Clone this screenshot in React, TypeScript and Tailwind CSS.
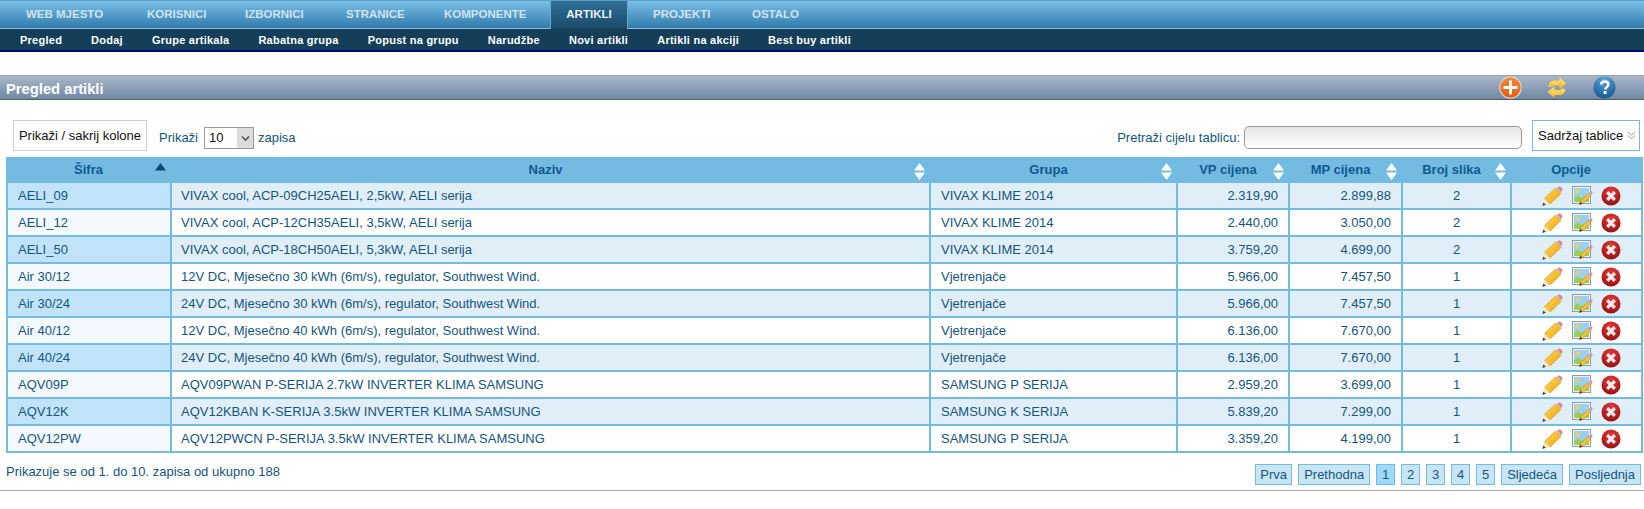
import React from "react";

const rows = [
  ["AELI_09", "VIVAX cool, ACP-09CH25AELI, 2,5kW, AELI serija", "VIVAX KLIME 2014", "2.319,90", "2.899,88", "2"],
  ["AELI_12", "VIVAX cool, ACP-12CH35AELI, 3,5kW, AELI serija", "VIVAX KLIME 2014", "2.440,00", "3.050,00", "2"],
  ["AELI_50", "VIVAX cool, ACP-18CH50AELI, 5,3kW, AELI serija", "VIVAX KLIME 2014", "3.759,20", "4.699,00", "2"],
  ["Air 30/12", "12V DC, Mjesečno 30 kWh (6m/s), regulator, Southwest Wind.", "Vjetrenjače", "5.966,00", "7.457,50", "1"],
  ["Air 30/24", "24V DC, Mjesečno 30 kWh (6m/s), regulator, Southwest Wind.", "Vjetrenjače", "5.966,00", "7.457,50", "1"],
  ["Air 40/12", "12V DC, Mjesečno 40 kWh (6m/s), regulator, Southwest Wind.", "Vjetrenjače", "6.136,00", "7.670,00", "1"],
  ["Air 40/24", "24V DC, Mjesečno 40 kWh (6m/s), regulator, Southwest Wind.", "Vjetrenjače", "6.136,00", "7.670,00", "1"],
  ["AQV09P", "AQV09PWAN P-SERIJA 2.7kW INVERTER KLIMA SAMSUNG", "SAMSUNG P SERIJA", "2.959,20", "3.699,00", "1"],
  ["AQV12K", "AQV12KBAN K-SERIJA 3.5kW INVERTER KLIMA SAMSUNG", "SAMSUNG K SERIJA", "5.839,20", "7.299,00", "1"],
  ["AQV12PW", "AQV12PWCN P-SERIJA 3.5kW INVERTER KLIMA SAMSUNG", "SAMSUNG P SERIJA", "3.359,20", "4.199,00", "1"],
];

const navLeft: [string, string][] = [
  ["WEB MJESTO", "w-[121px] pl-[21px]"],
  ["KORISNICI", "w-[98px] pl-[21px]"],
  ["IZBORNICI", "w-[101px] pl-[21px]"],
  ["STRANICE", "w-[98px] pl-[21px]"],
  ["KOMPONENTE", "w-[127px] pl-[21px]"],
];
const navRight: [string, string][] = [
  ["PROJEKTI", "w-[99px] pl-[25px]"],
  ["OSTALO", "w-[99px] pl-[25px]"],
];
const sub = ["Pregled", "Dodaj", "Grupe artikala", "Rabatna grupa", "Popust na grupu", "Narudžbe", "Novi artikli", "Artikli na akciji", "Best buy artikli"];

function PlusIcon() {
  return (
    <svg width="23" height="23" viewBox="0 0 23 23">
      <defs>
        <linearGradient id="pl" x1="0" y1="0" x2="0" y2="1">
          <stop offset="0" stopColor="#f58a3c" />
          <stop offset="1" stopColor="#e8590c" />
        </linearGradient>
      </defs>
      <circle cx="11.5" cy="11.5" r="10.7" fill="url(#pl)" stroke="#d9d4d0" strokeWidth="1.2" />
      <path d="M11.5 4.5v14M4.5 11.5h14" stroke="#fff" strokeWidth="3" />
    </svg>
  );
}

function SyncIcon() {
  return (
    <svg width="20" height="22" viewBox="0 0 20 22">
      <defs>
        <linearGradient id="sy" x1="0" y1="0" x2="0" y2="1">
          <stop offset="0" stopColor="#ffe680" />
          <stop offset="1" stopColor="#fbb516" />
        </linearGradient>
      </defs>
      <path d="M19.500 6.500 12.500 0.500V3.500H8C4.500 3.500 2 5.500 1.500 9.500L5.500 10C5.800 8.800 6.500 8.500 8 8.500H12.500V12z" fill="url(#sy)" />
      <path d="M0.500 15 7.500 21V18H12C15.500 18 18 16 18.500 12L14.500 11.500C14.200 12.800 13.500 13 12 13H7.500V9.500z" fill="url(#sy)" />
    </svg>
  );
}

function HelpIcon() {
  return (
    <svg width="23" height="23" viewBox="0 0 23 23">
      <defs>
        <radialGradient id="hp" cx="0.5" cy="0.15" r="0.95">
          <stop offset="0" stopColor="#5aa6dc" />
          <stop offset="1" stopColor="#0f4f8a" />
        </radialGradient>
      </defs>
      <circle cx="11.500" cy="11.500" r="11" fill="url(#hp)" />
      <path d="M8 8.500c.3-2 1.700-3 3.700-3 2.200 0 3.700 1.200 3.700 3 0 2.600-3 2.600-3 5" fill="none" stroke="#fff" strokeWidth="2.400" />
      <rect x="10.700" y="15" width="2.800" height="3" fill="#fff" />
    </svg>
  );
}

function PencilIcon() {
  return (
    <svg width="21" height="20" viewBox="0 0 21 20">
      <defs>
        <linearGradient id="pn" x1="0" y1="0" x2="1" y2="1">
          <stop offset="0" stopColor="#ffdc55" />
          <stop offset="1" stopColor="#f0a010" />
        </linearGradient>
      </defs>
      <path d="M2.500 12.500 13.500 2 19 7.500 8 18z" fill="url(#pn)" stroke="#d9951a" strokeWidth="0.700" />
      <path d="M15.500 1.500 16.500 0.700C17.300 .2 18.200 .4 19 1.200L19.800 2C20.600 2.900 20.600 3.800 20.200 4.600L19.200 5.800z" fill="#e88088" />
      <path d="m14.800 1.800 4.600 4.600" stroke="#b4b4bc" strokeWidth="1.300" />
      <path d="M2.500 12.500 8 18 0.500 19.800z" fill="#f6e6c4" />
      <path d="M1.300 16.500 0.400 19.900 3.800 18.800z" fill="#3c3c3c" />
    </svg>
  );
}

function ImageEditIcon() {
  return (
    <svg width="21" height="19" viewBox="0 0 21 19">
      <rect x="0.500" y="0.500" width="18" height="17" fill="#eef2f6" stroke="#8e9cab" />
      <rect x="2" y="2" width="15" height="14" fill="#9bd0f3" />
      <circle cx="5.500" cy="5.500" r="2" fill="#ffd23c" />
      <path d="M2 16v-4l4-2.500 3.500 2.500 3-1.500 4.500 3V16z" fill="#9bcf4f" />
      <path d="M7.500 18.500 8.500 15 16.500 7l2.500 2.500-8 8z" fill="#f7c13a" stroke="#b07c1f" strokeWidth="0.500" />
      <path d="m16.500 7 1.500-1.500c.5-.5 1.200-.5 1.700 0l.6.600c.5.500.4 1.100 0 1.700L19 9.500z" fill="#c09ad2" />
      <path d="M7.300 18.800l1-3.300 2.300 2.300z" fill="#444" />
    </svg>
  );
}

function DeleteIcon() {
  return (
    <svg width="20" height="20" viewBox="0 0 20 20">
      <defs>
        <radialGradient id="dl" cx="0.5" cy="0.3" r="0.8">
          <stop offset="0" stopColor="#ea3a3a" />
          <stop offset="1" stopColor="#8e0c0c" />
        </radialGradient>
      </defs>
      <circle cx="10" cy="10" r="9.500" fill="url(#dl)" />
      <path d="m6.200 6.200 7.600 7.600m0-7.600-7.600 7.600" stroke="#f8eeee" strokeWidth="3.200" />
    </svg>
  );
}

function SortArrows({ dark }: { dark?: boolean }) {
  return (
    <svg width="11" height="17" viewBox="0 0 11 17" className="absolute top-[4px] right-[5px]">
      <path d="M5.500 0 11 7.500H0z" fill={dark ? "#14456a" : "#fff"} />
      {!dark && <path d="M5.500 17 11 9.500H0z" fill="#fff" />}
    </svg>
  );
}

const headers: [string, string, boolean?, boolean?][] = [
  ["Šifra", "w-[164px] pr-[2px]", true, true],
  ["Naziv", "w-[759px] pr-[10px]", true],
  ["Grupa", "w-[247px] pr-[10px]", true],
  ["VP cijena", "w-[112px] pr-[10px]", true],
  ["MP cijena", "w-[113px] pr-[10px]", true],
  ["Broj slika", "w-[109px] pr-[10px]", true],
  ["Opcije", "w-[131px] pr-[10px]", false],
];

const pages = ["Prva", "Prethodna", "1", "2", "3", "4", "5", "Sljedeća", "Posljednja"];

export default function App() {
  return (
    <div className="h-[509px] w-[1644px] overflow-hidden bg-white font-['Liberation_Sans',Arial,sans-serif] text-[13px] text-[#14557d]">
      <div className="flex h-[29px] border-t border-t-[#5d9fc8] border-b border-b-[#8fc0dc] bg-gradient-to-b from-[#7bbfe6] to-[#2f7bab] pl-[5px]">
        {navLeft.map(([n, w]) => (
          <div key={n} className={`flex items-center text-[11.5px] font-bold text-[#cfe3ef] ${w}`}>
            {n}
          </div>
        ))}
        <div className="flex h-[28px] w-[78px] items-start justify-center border-x border-x-[#6aa9d0] bg-gradient-to-b from-[#2f7197] to-[#1a4a68] pt-[5px] text-[11.5px] font-bold text-[#e8f2f8]">
          ARTIKLI
        </div>
        {navRight.map(([n, w]) => (
          <div key={n} className={`flex items-center text-[11.5px] font-bold text-[#cfe3ef] ${w}`}>
            {n}
          </div>
        ))}
      </div>
      <div className="flex h-[23px] gap-[29px] border-b-2 border-b-[#000a78] bg-[#153e59] pl-[20px] pt-[1px]">
        {sub.map((s) => (
          <div key={s} className="flex items-center text-[11px] font-bold tracking-[0.25px] text-white">
            {s}
          </div>
        ))}
      </div>

      <div className="mt-[23px] flex h-[25px] items-center justify-between border-t border-t-[#9aa0a8] border-b border-b-[#4f5d70] bg-gradient-to-b from-[#aab7c9] to-[#7288a4] pl-[6px]">
        <span className="pt-[3px] text-[14.75px] font-bold text-white">Pregled artikli</span>
        <div className="flex items-center pr-[28px]">
          <PlusIcon />
          <span className="ml-[25px] flex"><SyncIcon /></span>
          <span className="ml-[26px] flex"><HelpIcon /></span>
        </div>
      </div>

      <div className="mx-[4px] mt-[20px] flex h-[31px] items-start justify-between">
        <div className="ml-[9px] flex items-center">
          <div className="flex h-[31px] w-[134px] items-center justify-center border border-[#cfcfcf] text-[#111]">
            Prikaži / sakrij kolone
          </div>
          <span className="ml-[12px] mt-[5px]">Prikaži</span>
          <span className="relative ml-[6px] mt-[5px] flex h-[22px] w-[50px] items-center border border-[#999] bg-white pl-[4px] text-[#111]">
            10
            <span className="absolute top-0 right-0 flex h-[20px] w-[16px] items-center justify-center bg-[#dcdcdc]">
              <svg width="9" height="7" viewBox="0 0 9 7"><path d="M1 1.500 4.500 5 8 1.500" fill="none" stroke="#555" strokeWidth="1.600" /></svg>
            </span>
          </span>
          <span className="ml-[4px] mt-[5px]">zapisa</span>
        </div>
        <div className="flex items-center">
          <span className="mr-[4px] mt-[4px]">Pretraži cijelu tablicu:</span>
          <div className="mt-[4px] h-[23px] w-[278px] rounded-[5px] border border-[#999] bg-gradient-to-b from-[#e6e6e6] to-white" />
          <div className="ml-[10px] flex h-[31px] w-[108px] items-center justify-between border border-[#74bbe2] pl-[5px] pr-[3px] text-[#111]">
            Sadržaj tablice
            <svg width="9" height="9" viewBox="0 0 9 9"><path d="M1 1 4.500 4 8 1M1 4.500 4.500 7.500 8 4.500" fill="none" stroke="#a0a0a0" /></svg>
          </div>
        </div>
      </div>

      <div className="ml-[6px] mt-[6px] w-[1635px]">
        <table className="w-[1635px] table-fixed border-collapse border-2 border-[#74bbe2]">
          <thead>
            <tr className="h-[24px] bg-[#74bbe2]">
              {headers.map(([h, w, sort, dark]) => (
                <th key={h} className={`relative p-0 text-center font-bold text-[#0d5a90] ${w}`}>
                  {h}
                  {sort && <SortArrows dark={dark} />}
                </th>
              ))}
            </tr>
          </thead>
          <tbody>
            {rows.map((r, i) => {
              const odd = i % 2 === 0;
              const cell = `border-2 border-[#74bbe2] p-0 ${odd ? "bg-[#e0eef8]" : "bg-white"}`;
              return (
                <tr key={r[0]} className="h-[27px]">
                  <td className={`border-2 border-[#74bbe2] p-0 pl-[10px] ${odd ? "bg-[#c0e3fa]" : "bg-[#f3f9fe]"}`}>{r[0]}</td>
                  <td className={`${cell} pl-[9px]`}>{r[1]}</td>
                  <td className={`${cell} pl-[10px]`}>{r[2]}</td>
                  <td className={`${cell} pr-[10px] text-right`}>{r[3]}</td>
                  <td className={`${cell} pr-[10px] text-right`}>{r[4]}</td>
                  <td className={`${cell} text-center`}>{r[5]}</td>
                  <td className={cell}>
                    <div className="flex items-center pl-[30px]">
                      <PencilIcon />
                      <span className="ml-[9px] flex"><ImageEditIcon /></span>
                      <span className="ml-[8px] flex"><DeleteIcon /></span>
                    </div>
                  </td>
                </tr>
              );
            })}
          </tbody>
        </table>
      </div>

      <div className="ml-[6px] mt-[11px] flex h-[21px] w-[1635px] items-start justify-between">
        <span className="mt-[-2px]">Prikazuje se od 1. do 10. zapisa od ukupno 188</span>
        <div className="flex gap-[6px]">
          {pages.map((p) => (
            <div key={p} className={`flex h-[21px] items-center justify-center border border-[#74bbe2] ${p.length === 1 ? "w-[19px]" : p === "Prva" ? "w-[37px]" : "px-[5px]"} ${p === "1" ? "bg-[#9ed8fb]" : "bg-[#c8e5f6]"}`}>
              {p}
            </div>
          ))}
        </div>
      </div>
      <div className="mt-[5px] h-[1px] bg-[#aaaaaa]" />
    </div>
  );
}
